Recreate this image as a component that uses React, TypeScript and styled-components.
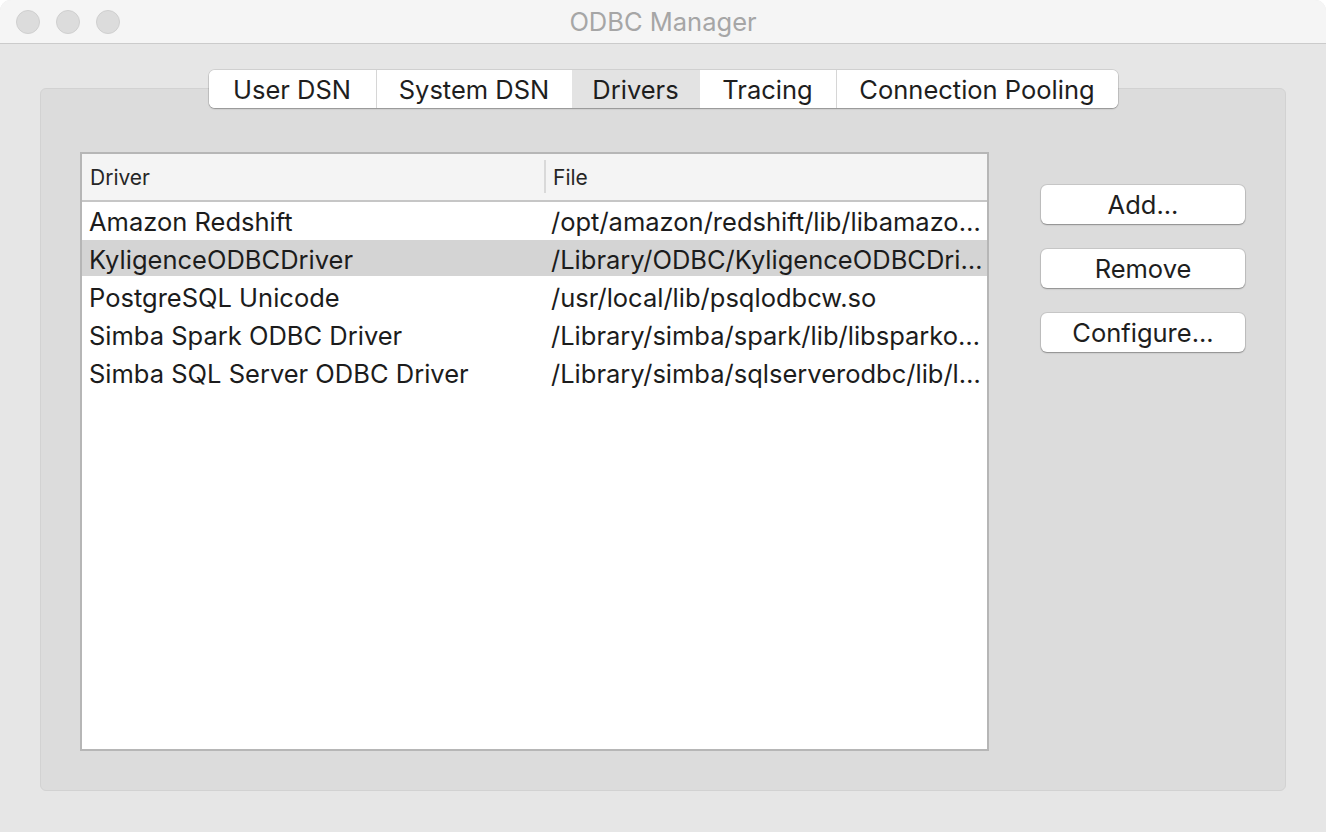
import React from "react";
import styled, { createGlobalStyle } from "styled-components";

const GlobalStyle = createGlobalStyle`
  html, body { margin: 0; padding: 0; background: #ffffff; }
  body { font-family: Inter, "Noto Sans", "Liberation Sans", sans-serif; -webkit-font-smoothing: antialiased; }
  * { box-sizing: border-box; }
`;

const Window = styled.div`
  width: 1326px;
  height: 832px;
  display: flex;
  flex-direction: column;
  background: #e6e6e6;
  border-radius: 11px 11px 0 0;
  overflow: hidden;
`;

const TitleBar = styled.div`
  height: 44px;
  flex: none;
  display: flex;
  align-items: center;
  background: #f5f5f5;
  border-bottom: 1px solid #cbcbcb;
  position: relative;
  padding-left: 16px;
`;

const Lights = styled.div`
  display: flex;
  gap: 16px;
`;

const Light = styled.span`
  width: 24px;
  height: 24px;
  border-radius: 50%;
  background: #dcdcdc;
  border: 1px solid #cfcfcf;
`;

const Title = styled.div`
  position: absolute;
  left: 0;
  right: 0;
  text-align: center;
  font-size: 25.5px;
  color: #a6a6a6;
  pointer-events: none;
`;

const Content = styled.div`
  flex: 1;
  display: flex;
  flex-direction: column;
  align-items: center;
  padding: 26px 40px 41px 40px;
`;

const TabStrip = styled.div`
  position: relative;
  z-index: 1;
  display: flex;
  height: 38px;
  background: #ffffff;
  border-radius: 6px;
  box-shadow: 0 0 0 1px rgba(0, 0, 0, 0.09), 0 1px 1.5px rgba(0, 0, 0, 0.28);
  overflow: hidden;
`;

const Tab = styled.div<{ $w: number; $active?: boolean; $divider?: boolean }>`
  width: ${(p) => p.$w}px;
  display: flex;
  align-items: center;
  justify-content: center;
  font-size: 25.5px;
  color: #1e1e1e;
  background: ${(p) => (p.$active ? "#e3e3e3" : "#ffffff")};
  border-left: ${(p) => (p.$divider ? "1px solid #d6d6d6" : "none")};
  white-space: nowrap;
`;

const Panel = styled.div`
  align-self: stretch;
  flex: 1;
  margin-top: -20px;
  background: #dcdcdc;
  border: 1px solid #d2d2d2;
  border-radius: 6px;
  display: flex;
  padding: 63px 40px 39px 39px;
  gap: 52px;
`;

const Table = styled.div`
  flex: none;
  width: 909px;
  border: 2px solid #b6b6b6;
  background: #ffffff;
  display: flex;
  flex-direction: column;
`;

const HeaderRow = styled.div`
  height: 48px;
  flex: none;
  display: grid;
  grid-template-columns: 462px 1fr;
  background: #f4f4f4;
  border-bottom: 2px solid #c6c6c6;
`;

const HeaderCell = styled.div<{ $sep?: boolean }>`
  display: flex;
  align-items: center;
  padding-left: ${(p) => (p.$sep ? "9px" : "8px")};
  font-size: 21px;
  color: #262626;
  position: relative;
  ${(p) =>
    p.$sep
      ? `&::before { content: ""; position: absolute; left: 0; top: 6px; bottom: 7px; width: 2px; background: #d9d9d9; }`
      : ""}
`;

const Row = styled.div<{ $selected?: boolean }>`
  height: 36px;
  flex: none;
  margin-bottom: 2px;
  display: grid;
  grid-template-columns: 462px 1fr;
  align-items: center;
  padding-top: 3px;
  background: ${(p) => (p.$selected ? "#d4d4d4" : "transparent")};
`;

const Cell = styled.div`
  font-size: 25.5px;
  color: #1c1c1c;
  padding-left: 7px;
  padding-right: 4px;
  white-space: nowrap;
  overflow: hidden;
  text-overflow: ellipsis;
`;

const Buttons = styled.div`
  flex: none;
  width: 204px;
  display: flex;
  flex-direction: column;
  gap: 25px;
  padding-top: 33px;
`;

const Button = styled.button`
  height: 39px;
  border: none;
  background: #ffffff;
  border-radius: 6px;
  box-shadow: 0 0 0 1px rgba(0, 0, 0, 0.09), 0 1px 1.5px rgba(0, 0, 0, 0.3);
  font-family: inherit;
  font-size: 25.5px;
  color: #1e1e1e;
  padding: 0;
`;

const tabs = [
  { label: "User DSN", w: 167 },
  { label: "System DSN", w: 196 },
  { label: "Drivers", w: 128, active: true },
  { label: "Tracing", w: 136 },
  { label: "Connection Pooling", w: 282 },
];

const drivers = [
  { name: "Amazon Redshift", file: "/opt/amazon/redshift/lib/libamazo…" },
  { name: "KyligenceODBCDriver", file: "/Library/ODBC/KyligenceODBCDri…", selected: true },
  { name: "PostgreSQL Unicode", file: "/usr/local/lib/psqlodbcw.so" },
  { name: "Simba Spark ODBC Driver", file: "/Library/simba/spark/lib/libsparko…" },
  { name: "Simba SQL Server ODBC Driver", file: "/Library/simba/sqlserverodbc/lib/l…" },
];

export default function App() {
  return (
    <>
      <GlobalStyle />
      <Window>
        <TitleBar>
          <Lights>
            <Light />
            <Light />
            <Light />
          </Lights>
          <Title>ODBC Manager</Title>
        </TitleBar>
        <Content>
          <TabStrip>
            {tabs.map((t, i) => {
              const prev = tabs[i - 1];
              const divider = i > 0 && !t.active && !(prev && prev.active);
              return (
                <Tab key={t.label} $w={t.w} $active={t.active} $divider={divider}>
                  {t.label}
                </Tab>
              );
            })}
          </TabStrip>
          <Panel>
            <Table>
              <HeaderRow>
                <HeaderCell>Driver</HeaderCell>
                <HeaderCell $sep>File</HeaderCell>
              </HeaderRow>
              {drivers.map((d) => (
                <Row key={d.name} $selected={d.selected}>
                  <Cell>{d.name}</Cell>
                  <Cell>{d.file}</Cell>
                </Row>
              ))}
            </Table>
            <Buttons>
              <Button>Add...</Button>
              <Button>Remove</Button>
              <Button>Configure...</Button>
            </Buttons>
          </Panel>
        </Content>
      </Window>
    </>
  );
}
